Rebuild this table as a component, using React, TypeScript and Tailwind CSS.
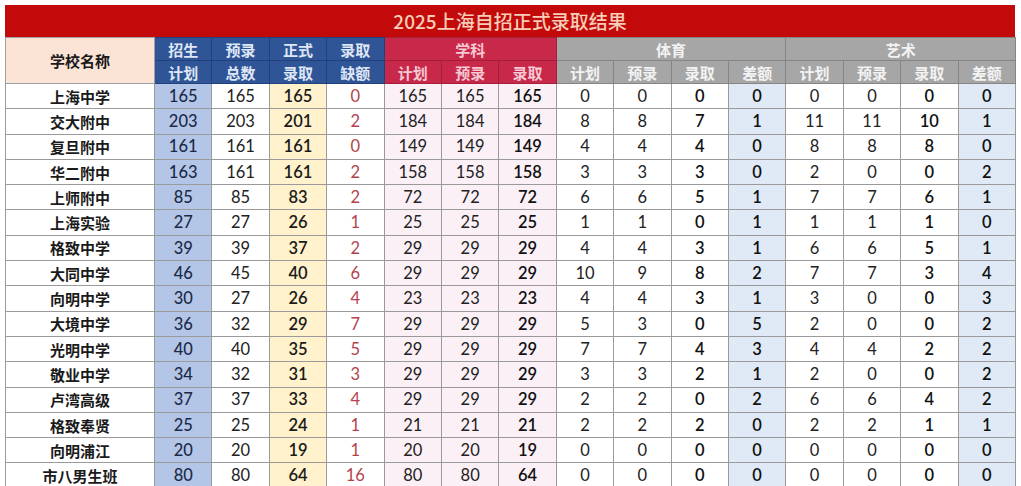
import React from "react";

type Row = [string, ...number[]];

const ROWS: Row[] = [
  ["上海中学", 165, 165, 165, 0, 165, 165, 165, 0, 0, 0, 0, 0, 0, 0, 0],
  ["交大附中", 203, 203, 201, 2, 184, 184, 184, 8, 8, 7, 1, 11, 11, 10, 1],
  ["复旦附中", 161, 161, 161, 0, 149, 149, 149, 4, 4, 4, 0, 8, 8, 8, 0],
  ["华二附中", 163, 161, 161, 2, 158, 158, 158, 3, 3, 3, 0, 2, 0, 0, 2],
  ["上师附中", 85, 85, 83, 2, 72, 72, 72, 6, 6, 5, 1, 7, 7, 6, 1],
  ["上海实验", 27, 27, 26, 1, 25, 25, 25, 1, 1, 0, 1, 1, 1, 1, 0],
  ["格致中学", 39, 39, 37, 2, 29, 29, 29, 4, 4, 3, 1, 6, 6, 5, 1],
  ["大同中学", 46, 45, 40, 6, 29, 29, 29, 10, 9, 8, 2, 7, 7, 3, 4],
  ["向明中学", 30, 27, 26, 4, 23, 23, 23, 4, 4, 3, 1, 3, 0, 0, 3],
  ["大境中学", 36, 32, 29, 7, 29, 29, 29, 5, 3, 0, 5, 2, 0, 0, 2],
  ["光明中学", 40, 40, 35, 5, 29, 29, 29, 7, 7, 4, 3, 4, 4, 2, 2],
  ["敬业中学", 34, 32, 31, 3, 29, 29, 29, 3, 3, 2, 1, 2, 0, 0, 2],
  ["卢湾高级", 37, 37, 33, 4, 29, 29, 29, 2, 2, 0, 2, 6, 6, 4, 2],
  ["格致奉贤", 25, 25, 24, 1, 21, 21, 21, 2, 2, 2, 0, 2, 2, 1, 1],
  ["向明浦江", 20, 20, 19, 1, 20, 20, 19, 0, 0, 0, 0, 0, 0, 0, 0],
  ["市八男生班", 80, 80, 64, 16, 80, 80, 64, 0, 0, 0, 0, 0, 0, 0, 0],
];

// style for each numeric column (index 0 = 招生计划)
const COL_STYLE = [
  "bg-[#b4c6e7] text-[#1c2a48] font-medium",
  "bg-white text-[#222]",
  "bg-[#fff2cc] text-[#1a1a1a] font-semibold",
  "bg-white text-[#b3434c]",
  "bg-[#fcf0f7] text-[#222]",
  "bg-[#fcf0f7] text-[#222]",
  "bg-[#fcf0f7] text-[#111] font-semibold",
  "bg-white text-[#222]",
  "bg-white text-[#222]",
  "bg-white text-[#111] font-semibold",
  "bg-[#dfeaf6] text-[#111] font-semibold",
  "bg-white text-[#222]",
  "bg-white text-[#222]",
  "bg-white text-[#111] font-semibold",
  "bg-[#dfeaf6] text-[#111] font-semibold",
];

const cjk = "font-['Noto_Sans_CJK_SC',sans-serif]";
const num = "font-['Lato','Noto_Sans_CJK_SC',sans-serif]";

const blueTh = `border border-[#22417c] bg-[#2f5597] text-[#dfe6f5] text-[15px] font-semibold ${cjk}`;
const redTh = `border border-[#a31f3a] bg-[#c8284a] text-[#f6c9d3] text-[15px] font-semibold ${cjk}`;
const grayTh = `border border-[#858585] bg-[#a6a6a6] text-[#f3f3f3] text-[15px] font-semibold ${cjk}`;

export default function App() {
  return (
    <div className="h-[486px] w-[1021px] overflow-hidden bg-white pl-[5px] pt-[5px]">
      <div className="w-[1010px]">
        {/* title */}
        <div
          className={`flex h-[32px] items-center justify-center bg-[#c20a0a] text-[19px] font-medium text-[#f7cdb8] ${cjk}`}
        >
          2025上海自招正式录取结果
        </div>

        <table className="w-[1010px] table-fixed border-collapse text-center">
          <colgroup>
            <col className="w-[149px]" />
            {Array.from({ length: 15 }).map((_, i) => (
              <col key={i} className="w-[57.4px]" />
            ))}
          </colgroup>
          <thead>
            <tr className="h-[23px] leading-none">
              <th
                rowSpan={2}
                className={`border border-[#a0a0a0] bg-[#fbe4d6] text-[15px] font-bold text-[#1a1a1a] ${cjk}`}
              >
                学校名称
              </th>
              <th className={blueTh}>招生</th>
              <th className={blueTh}>预录</th>
              <th className={blueTh}>正式</th>
              <th className={blueTh}>录取</th>
              <th colSpan={3} className={redTh}>
                学科
              </th>
              <th colSpan={4} className={grayTh}>
                体育
              </th>
              <th colSpan={4} className={grayTh}>
                艺术
              </th>
            </tr>
            <tr className="h-[23px] leading-none">
              <th className={blueTh}>计划</th>
              <th className={blueTh}>总数</th>
              <th className={blueTh}>录取</th>
              <th className={blueTh}>缺额</th>
              <th className={redTh}>计划</th>
              <th className={redTh}>预录</th>
              <th className={redTh}>录取</th>
              <th className={grayTh}>计划</th>
              <th className={grayTh}>预录</th>
              <th className={grayTh}>录取</th>
              <th className={grayTh}>差额</th>
              <th className={grayTh}>计划</th>
              <th className={grayTh}>预录</th>
              <th className={grayTh}>录取</th>
              <th className={grayTh}>差额</th>
            </tr>
          </thead>
          <tbody>
            {ROWS.map(([name, ...vals]) => (
              <tr key={name} className="h-[25.3px] leading-none">
                <td
                  className={`border border-[#9a9a9a] bg-white text-[15px] font-bold text-[#1a1a1a] ${cjk}`}
                >
                  {name}
                </td>
                {vals.map((v, i) => (
                  <td
                    key={i}
                    className={`border border-[#9a9a9a] text-[16.5px] ${num} ${COL_STYLE[i]}`}
                  >
                    {v}
                  </td>
                ))}
              </tr>
            ))}
          </tbody>
        </table>
      </div>
    </div>
  );
}
